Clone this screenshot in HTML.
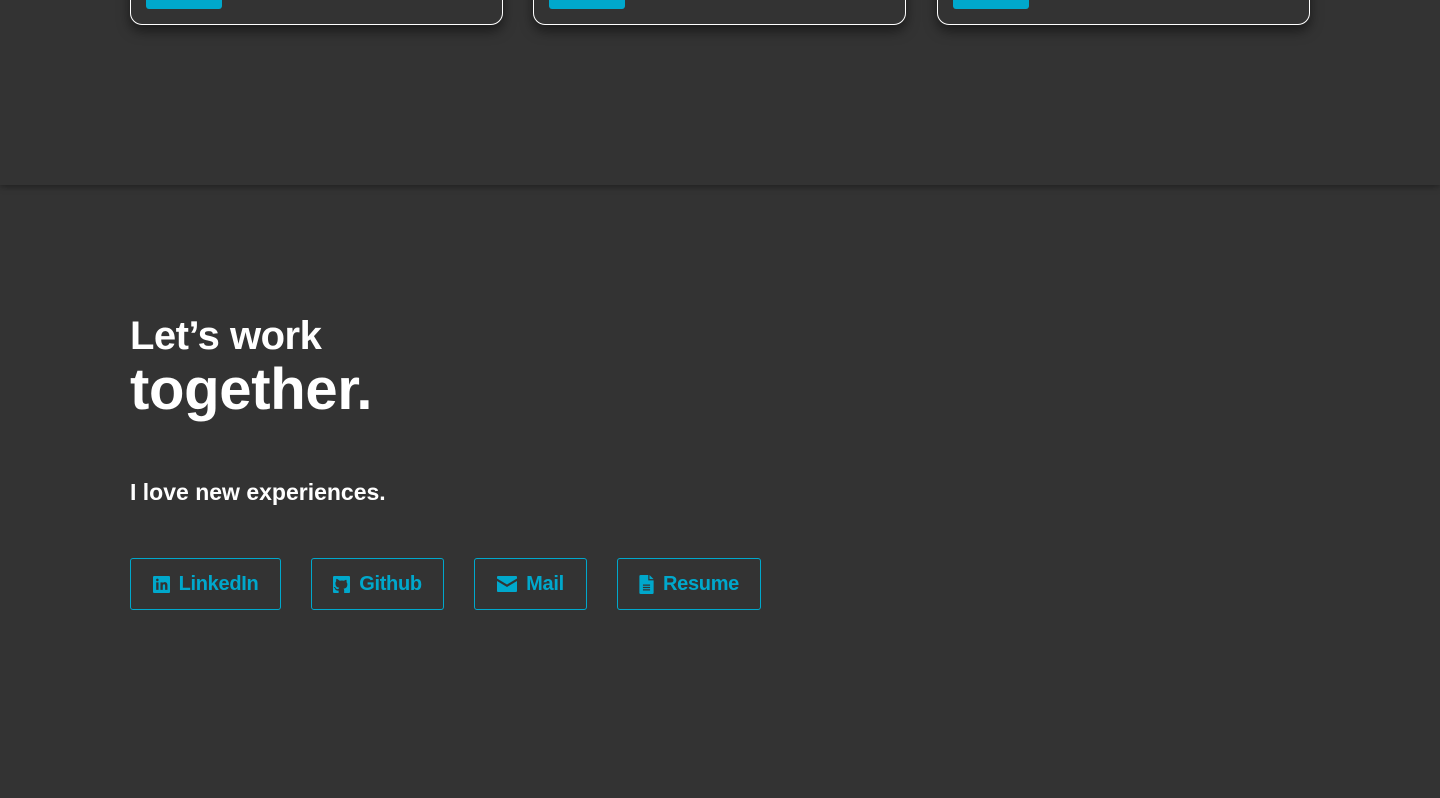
<!DOCTYPE html>
<html><head><style>
body{margin:0;width:1440px;height:798px;background:#333;font-family:"Liberation Sans",sans-serif;overflow:hidden;position:relative}
.top{position:absolute;left:0;top:0;width:1440px;height:185px;background:#333;box-shadow:0 2px 6px rgba(0,0,0,.35);z-index:1}
.card{position:absolute;top:-60px;height:83px;width:371px;border:1px solid #fff;border-radius:12px;box-shadow:0 6px 12px rgba(0,0,0,.5);background:#333}
.card i{position:absolute;left:15px;bottom:15px;width:76px;height:20px;background:#00a8cc;border-radius:3px}
h1{position:absolute;left:130px;top:316px;margin:0;color:#fff;font-weight:bold;line-height:1}
.l1{font-size:40px;letter-spacing:-0.5px;display:block}
.l2{font-size:58px;letter-spacing:-0.3px;display:block;margin-top:5px}
p{position:absolute;left:130px;top:479px;margin:0;color:#fff;font-weight:bold;font-size:23px;letter-spacing:0px}
.b{position:absolute;top:558px;height:50px;border:1px solid #00a8cc;border-radius:3px;color:#00a8cc;font-weight:bold;font-size:20px;display:flex;align-items:center;justify-content:center;gap:9px;letter-spacing:-0.3px}
.b svg{fill:#00a8cc}
</style></head><body>
<div class="top">
<div class="card" style="left:130px"><i></i></div>
<div class="card" style="left:533px"><i></i></div>
<div class="card" style="left:937px"><i></i></div>
</div>
<h1><span class="l1">Let’s work</span><span class="l2">together.</span></h1>
<p>I love new experiences.</p>
<div class="b" style="left:130px;width:149px"><svg width="17" height="17" viewBox="0 0 16 16"><path d="M1 0h14a1 1 0 0 1 1 1v14a1 1 0 0 1-1 1H1a1 1 0 0 1-1-1V1a1 1 0 0 1 1-1zm2 6v7h2.2V6zm1.1-3.5a1.2 1.2 0 1 0 0 2.4 1.2 1.2 0 0 0 0-2.4zM7 6v7h2.2V9.5c0-1 .3-1.7 1.2-1.7s1 .8 1 1.7V13h2.2V9c0-2-.8-3.2-2.6-3.2-1 0-1.6.5-1.8 1V6z"/></svg>LinkedIn</div>
<div class="b" style="left:311px;width:131px"><svg width="17" height="17" viewBox="0 0 16 16"><path d="M1 0h14a1 1 0 0 1 1 1v14a1 1 0 0 1-1 1h-4.5v-2.5c0-.8-.3-1.3-.6-1.6 2-.2 3.6-1 3.6-4 0-.9-.3-1.6-.8-2.1.1-.2.3-1-.1-2.1 0 0-.7-.2-2.2.8a7 7 0 0 0-4 0C3.9 2.5 3.2 2.7 3.2 2.7c-.4 1.1-.2 1.900-.1 2.1-.5.5-.8 1.2-.8 2.1 0 3 1.6 3.8 3.6 4-.3.3-.5.6-.6 1.200-.6.3-2 .6-2.8-.8 0 0-.5-.9-1.4-.9 0 0-.9 0 0 .6 0 0 .6.3 1 1.4 0 0 .5 1.8 3.2 1.2V16H1a1 1 0 0 1-1-1V1a1 1 0 0 1 1-1z"/></svg>Github</div>
<div class="b" style="left:474px;width:111px"><svg width="20" height="16" viewBox="0 0 20 16"><path d="M1 0h18a1 1 0 0 1 1 1v1.5l-10 6-10-6V1a1 1 0 0 1 1-1zM0 5l10 6 10-6v10a1 1 0 0 1-1 1H1a1 1 0 0 1-1-1z"/></svg>Mail</div>
<div class="b" style="left:617px;width:142px"><svg width="15" height="19" viewBox="0 0 12 16"><path d="M1 0h6.5v4.5H12V15a1 1 0 0 1-1 1H1a1 1 0 0 1-1-1V1a1 1 0 0 1 1-1zm7.5 0L12 3.5H8.5zM3 8v1h6V8zm0 2v1h6v-1zm0 2v1h6v-1z"/></svg>Resume</div>
</body></html>
